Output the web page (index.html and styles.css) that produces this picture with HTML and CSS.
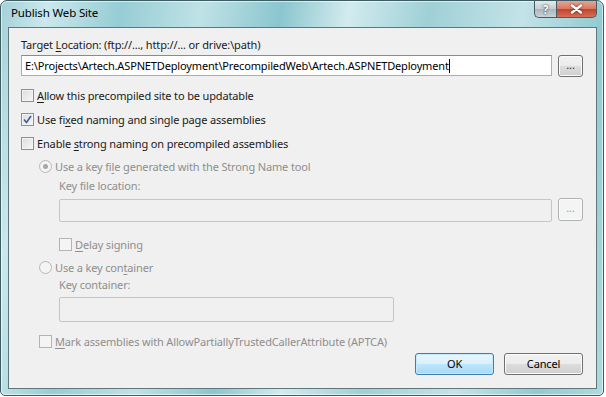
FILE: index.html
```html
<!doctype html>
<html lang="en">
<head>
	<meta charset="UTF-8">
	<title>Publish Web Site</title>
	<link rel="stylesheet" href="styles.css">
</head>
<body>
	<div class="window">
		<div class="titlebar">
			<span class="title">Publish Web Site</span>
			<div class="caption">
				<span class="cap-help">?</span>
				<span class="cap-close">
					<svg width="13" height="10" viewBox="0 0 13 10"><path d="M2 1.5 L11 8.5 M11 1.5 L2 8.5" stroke="#fff" stroke-width="2.4" stroke-linecap="round"/></svg>
				</span>
			</div>
		</div>
		<div class="client">
			<div class="label first">Target <u>L</u>ocation: (ftp://..., http://... or drive:\path)</div>
			<div class="pathrow">
				<div class="field">E:\Projects\Artech.ASPNETDeployment\PrecompiledWeb\Artech.ASPNETDeployment<span class="caret"></span></div>
				<span class="browse">...</span>
			</div>

			<div class="check cb1"><span class="box"></span><span><u>A</u>llow this precompiled site to be updatable</span></div>
			<div class="check"><span class="box checked"><svg width="9" height="9" viewBox="0 0 9 9"><path d="M1 4.5 L3.5 7.5 L8 1" fill="none" stroke="#3a5f9a" stroke-width="1.6"/></svg></span><span>Use fi<u>x</u>ed naming and single page assemblies</span></div>
			<div class="check"><span class="box"></span><span>Enable <u>s</u>trong naming on precompiled assemblies</span></div>

			<div class="check off indent radio-row"><span class="radio on"></span><span>Use a key fi<u>l</u>e generated with the Strong Name tool</span></div>
			<div class="label off indent2 sub file-lbl">Key file location:</div>
			<div class="pathrow indent2 keyfile">
				<div class="field off"></div>
				<span class="browse off">...</span>
			</div>
			<div class="check off indent2 delay"><span class="box"></span><span><u>D</u>elay signing</span></div>

			<div class="check off indent radio-row"><span class="radio"></span><span>Use a key con<u>t</u>ainer</span></div>
			<div class="label off indent2 sub cont-lbl">Key container:</div>
			<div class="indent2 keycont">
				<div class="field off short"></div>
			</div>
			<div class="check off indent mark"><span class="box"></span><span><u>M</u>ark assemblies with AllowPartiallyTrustedCallerAttribute (APTCA)</span></div>

			<div class="buttons">
				<span class="btn default">OK</span>
				<span class="btn">Cancel</span>
			</div>
		</div>
	</div>
</body>
</html>
```

FILE: styles.css
```css
*{
	margin: 0;
	padding: 0;
	box-sizing: border-box;
}
body{
	background: #fff;
	font-family: "Noto Sans", "Open Sans", sans-serif;
	font-size: 11px;
	letter-spacing: -0.15px;
	color: #1a1a1a;
}
u{
	text-decoration-thickness: 1px;
	text-underline-offset: 2px;
}
.window{
	width: 604px;
	height: 396px;
	border: 1px solid #3d5d63;
	border-radius: 7px 7px 5px 5px;
	background: linear-gradient(100deg, #a3d1d8 0%, #cbe8ec 7%, #96cdd4 18%, #bfe2e6 30%, #8bc6ce 42%, #d2ebee 52%, #9fd0d6 64%, #c3e3e7 78%, #92cad1 90%, #aedade 100%);
	box-shadow: inset 0 0 0 1px rgba(255,255,255,0.6);
	display: flex;
	flex-direction: column;
	padding: 0 6px 6px 7px;
	overflow: hidden;
}
.titlebar{
	height: 26px;
	display: flex;
	justify-content: space-between;
	align-items: flex-start;
}
.title{
	padding: 4px 0 0 3px;
	color: #000;
	font-size: 11.5px;
}
.caption{
	display: flex;
}
.cap-help, .cap-close{
	height: 17px;
	border: 1px solid #4b5b60;
	border-top: none;
	display: flex;
	align-items: center;
	justify-content: center;
}
.cap-help{
	width: 22px;
	border-radius: 0 0 0 5px;
	background: linear-gradient(#e4eaec, #c4ced1 50%, #a9b6ba 51%, #c9d3d6);
	color: #fff;
	font-weight: bold;
	font-size: 12px;
	text-shadow: 0 0 2px #39474b, 0 0 1px #39474b;
	border-right: none;
}
.cap-close{
	width: 41px;
	border-radius: 0 0 5px 0;
	background: linear-gradient(#e8a593, #d7765f 50%, #c2432b 51%, #d5705a);
}
.cap-close svg{
	filter: drop-shadow(0 0 1px #5a1d10);
}
.client{
	flex: 1;
	border: 1px solid #5f767b;
	background: #f0f0f0;
	padding: 9px 13px 0 12px;
	display: flex;
	flex-direction: column;
}
.label{
	height: 15px;
	line-height: 15px;
	white-space: nowrap;
}
.off{
	color: #8e8e8e;
}
.pathrow{
	display: flex;
	align-items: flex-start;
	gap: 6px;
	height: 22px;
	margin-top: 3px;
}
.field{
	flex: 1;
	height: 21px;
	border: 1px solid #abadb3;
	border-top-color: #7a8fa0;
	background: #fff;
	padding: 0 3px;
	line-height: 19px;
	white-space: nowrap;
	overflow: hidden;
	color: #000;
}
.field.off{
	height: 23px;
	background: #f0f0f0;
	border: 1px solid #c5c5c5;
	border-radius: 2px;
}
.field.short{
	width: 335px;
	height: 25px;
	flex: none;
}
.caret{
	display: inline-block;
	width: 1px;
	height: 14px;
	background: #000;
	vertical-align: -3px;
}
.browse{
	width: 25px;
	height: 22px;
	border: 1px solid #707070;
	border-radius: 3px;
	background: linear-gradient(#f2f2f2, #ebebeb 50%, #dddddd 51%, #cfcfcf);
	text-align: center;
	line-height: 17px;
	font-size: 11px;
	color: #333;
	box-shadow: inset 0 0 0 1px #fbfbfb;
}
.browse.off{
	border-color: #adb2b5;
	background: #f4f4f4;
	color: #a0a0a0;
	height: 23px;
	margin-top: -1px;
}
.check{
	height: 24px;
	display: flex;
	align-items: center;
	gap: 3px;
	white-space: nowrap;
}
.cb1{
	margin-top: 6px;
}
.box{
	width: 13px;
	height: 13px;
	border: 1px solid #8f8f8f;
	background: linear-gradient(135deg, #dcdcdc, #f7f7f7);
	box-shadow: inset 0 0 0 1px #f4f4f4;
	display: flex;
	align-items: center;
	justify-content: center;
}
.off .box{
	border-color: #b4b4b4;
	background: #f4f4f4;
}
.radio{
	width: 13px;
	height: 13px;
	border: 1px solid #b8b8b8;
	border-radius: 50%;
	background: #f4f4f4;
	display: flex;
	align-items: center;
	justify-content: center;
}
.radio.on::after{
	content: "";
	width: 5px;
	height: 5px;
	border-radius: 50%;
	background: #a8a8a8;
}
.indent{
	margin-left: 18px;
}
.indent2{
	margin-left: 38px;
}
.radio-row{
	height: 22px;
}
.sub{
	height: 16px;
	line-height: 16px;
}
.file-lbl{
	margin-top: 1px;
}
.keyfile{
	margin-top: 5px;
	height: 23px;
}
.delay{
	margin-top: 10px;
}
.cont-lbl{
	margin-top: -1px;
}
.keycont{
	margin-top: 4px;
	height: 25px;
}
.mark{
	margin-top: 7px;
}
.buttons{
	display: flex;
	justify-content: flex-end;
	gap: 10px;
}
.btn{
	width: 79px;
	height: 22px;
	border: 1px solid #707070;
	border-radius: 3px;
	background: linear-gradient(#f2f2f2, #ebebeb 50%, #dddddd 51%, #cfcfcf);
	box-shadow: inset 0 0 0 1px #fcfcfc;
	text-align: center;
	line-height: 20px;
	color: #000;
}
.btn.default{
	border-color: #3c7fb1;
	background: linear-gradient(#eaf6fd, #d9f0fc 50%, #bee6fd 51%, #a7d9f5);
	box-shadow: inset 0 0 0 1px #c3eafe;
}
```
